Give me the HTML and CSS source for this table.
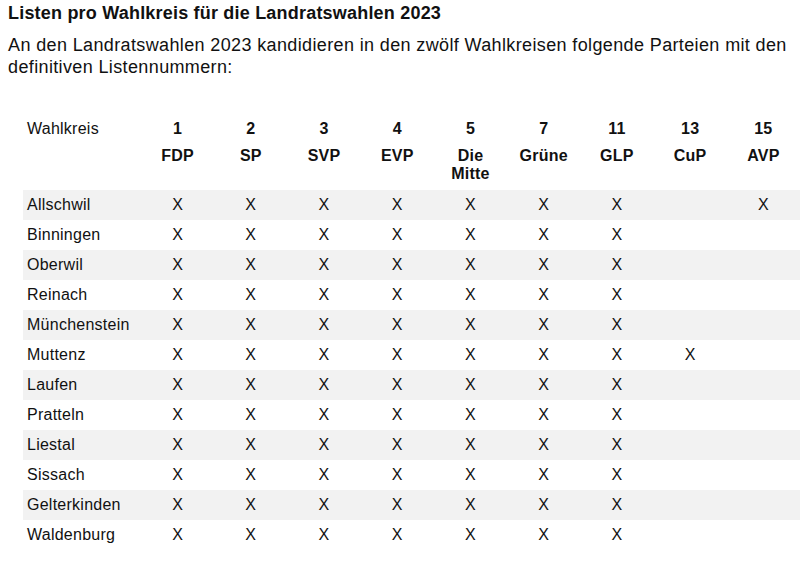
FILE: index.html
```html
<!DOCTYPE html>
<html lang="de">
<head>
<meta charset="utf-8">
<title>Listen pro Wahlkreis</title>
<link rel="stylesheet" href="styles.css">
</head>
<body>
<h1 class="title">Listen pro Wahlkreis für die Landratswahlen 2023</h1>
<p class="intro">An den Landratswahlen 2023 kandidieren in den zwölf Wahlkreisen folgende Parteien mit den definitiven Listennummern:</p>
<table class="lists">
<colgroup><col class="c-name"><col><col><col><col><col><col><col><col><col></colgroup>
<thead>
<tr class="h-num"><td class="name">Wahlkreis</td><th>1</th><th>2</th><th>3</th><th>4</th><th>5</th><th>7</th><th>11</th><th>13</th><th>15</th></tr>
<tr class="h-party"><td class="name"></td><th>FDP</th><th>SP</th><th>SVP</th><th>EVP</th><th>Die<br>Mitte</th><th>Grüne</th><th>GLP</th><th>CuP</th><th>AVP</th></tr>
</thead>
<tbody>
<tr><td class="name">Allschwil</td><td>X</td><td>X</td><td>X</td><td>X</td><td>X</td><td>X</td><td>X</td><td></td><td>X</td></tr>
<tr><td class="name">Binningen</td><td>X</td><td>X</td><td>X</td><td>X</td><td>X</td><td>X</td><td>X</td><td></td><td></td></tr>
<tr><td class="name">Oberwil</td><td>X</td><td>X</td><td>X</td><td>X</td><td>X</td><td>X</td><td>X</td><td></td><td></td></tr>
<tr><td class="name">Reinach</td><td>X</td><td>X</td><td>X</td><td>X</td><td>X</td><td>X</td><td>X</td><td></td><td></td></tr>
<tr><td class="name">Münchenstein</td><td>X</td><td>X</td><td>X</td><td>X</td><td>X</td><td>X</td><td>X</td><td></td><td></td></tr>
<tr><td class="name">Muttenz</td><td>X</td><td>X</td><td>X</td><td>X</td><td>X</td><td>X</td><td>X</td><td>X</td><td></td></tr>
<tr><td class="name">Laufen</td><td>X</td><td>X</td><td>X</td><td>X</td><td>X</td><td>X</td><td>X</td><td></td><td></td></tr>
<tr><td class="name">Pratteln</td><td>X</td><td>X</td><td>X</td><td>X</td><td>X</td><td>X</td><td>X</td><td></td><td></td></tr>
<tr><td class="name">Liestal</td><td>X</td><td>X</td><td>X</td><td>X</td><td>X</td><td>X</td><td>X</td><td></td><td></td></tr>
<tr><td class="name">Sissach</td><td>X</td><td>X</td><td>X</td><td>X</td><td>X</td><td>X</td><td>X</td><td></td><td></td></tr>
<tr><td class="name">Gelterkinden</td><td>X</td><td>X</td><td>X</td><td>X</td><td>X</td><td>X</td><td>X</td><td></td><td></td></tr>
<tr><td class="name">Waldenburg</td><td>X</td><td>X</td><td>X</td><td>X</td><td>X</td><td>X</td><td>X</td><td></td><td></td></tr>
</tbody>
</table>
</body>
</html>
```
FILE: styles.css
```css
html, body {
  margin: 0;
  padding: 0;
  background: #fff;
  overflow: hidden;
}
body {
  padding: 0 0 0 8px;
  font-family: "Liberation Sans", Arial, sans-serif;
  color: #111;
}
.title {
  margin: 3px 0 0;
  font-size: 18px;
  line-height: 20px;
  font-weight: bold;
  letter-spacing: 0.2px;
}
.intro {
  margin: 11px 0 0;
  font-size: 18px;
  line-height: 22px;
  letter-spacing: 0.37px;
  max-width: 790px;
}
.lists {
  margin: 32px 0 0 15px;
  border-collapse: collapse;
  table-layout: fixed;
  width: 777px;
  font-size: 16px;
  letter-spacing: 0.25px;
}
.lists col.c-name {
  width: 118px;
}
.lists th, .lists td {
  padding: 0;
  text-align: center;
  vertical-align: top;
}
.lists th {
  font-weight: bold;
}
.lists .name {
  text-align: left;
  padding-left: 4px;
}
.h-num th, .h-num td {
  line-height: 18px;
  padding-top: 10px;
  padding-bottom: 9px;
}
.h-party th, .h-party td {
  line-height: 18px;
  padding-bottom: 7px;
}
.lists tbody td {
  height: 30px;
  line-height: 30px;
  vertical-align: middle;
}
.lists tbody tr:nth-child(odd) {
  background: #f2f2f2;
}
```
